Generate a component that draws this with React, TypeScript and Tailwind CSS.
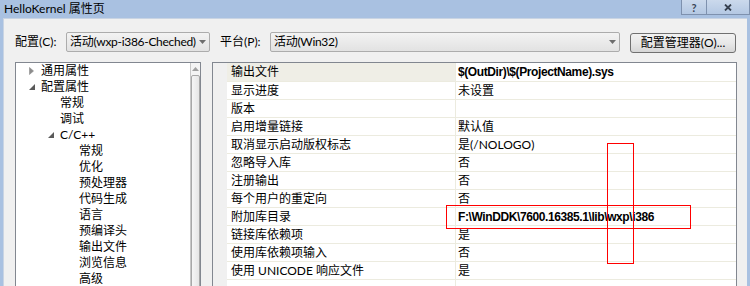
import React from "react";

const FONT = { fontFamily: 'Lato, "Noto Sans CJK SC", sans-serif' };
const BOLD_FONT = { fontFamily: '"Liberation Sans", "Noto Sans CJK SC", sans-serif' };

type TreeItem = { t: string; lvl: 0 | 1 | 2; arrow?: "c" | "e" };

const tree: TreeItem[] = [
  { t: "通用属性", lvl: 0, arrow: "c" },
  { t: "配置属性", lvl: 0, arrow: "e" },
  { t: "常规", lvl: 1 },
  { t: "调试", lvl: 1 },
  { t: "C/C++", lvl: 1, arrow: "e" },
  { t: "常规", lvl: 2 },
  { t: "优化", lvl: 2 },
  { t: "预处理器", lvl: 2 },
  { t: "代码生成", lvl: 2 },
  { t: "语言", lvl: 2 },
  { t: "预编译头", lvl: 2 },
  { t: "输出文件", lvl: 2 },
  { t: "浏览信息", lvl: 2 },
  { t: "高级", lvl: 2 },
];

const lvlPad: Record<number, string> = {
  0: "pl-[13px]",
  1: "pl-[32px]",
  2: "pl-[51px]",
};

type Row = { n: string; v: string; b?: boolean; sel?: boolean };

const rows: Row[] = [
  { n: "输出文件", v: "$(OutDir)\\$(ProjectName).sys", b: true, sel: true },
  { n: "显示进度", v: "未设置" },
  { n: "版本", v: "" },
  { n: "启用增量链接", v: "默认值" },
  { n: "取消显示启动版权标志", v: "是(/NOLOGO)" },
  { n: "忽略导入库", v: "否" },
  { n: "注册输出", v: "否" },
  { n: "每个用户的重定向", v: "否" },
  { n: "附加库目录", v: "F:\\WinDDK\\7600.16385.1\\lib\\wxp\\i386", b: true },
  { n: "链接库依赖项", v: "是" },
  { n: "使用库依赖项输入", v: "否" },
  { n: "使用 UNICODE 响应文件", v: "是" },
];

function DropArrow() {
  return (
    <svg width="7" height="4" viewBox="0 0 7 4" className="shrink-0">
      <path d="M0 0 L7 0 L3.5 4 Z" fill="#6d6d6d" />
    </svg>
  );
}

function Combo({ text, w }: { text: string; w: string }) {
  return (
    <div
      className={`${w} h-[20px] flex items-center justify-between border border-[#acacac] rounded-[2px] bg-gradient-to-b from-[#f3f3f3] to-[#e2e2e2] pl-[3px] pr-[3px] text-[12px] text-black`}
    >
      <span className="leading-none whitespace-nowrap tracking-[-0.3px]">{text}</span>
      <DropArrow />
    </div>
  );
}

function TreeArrow({ kind }: { kind: "c" | "e" }) {
  if (kind === "c") {
    return (
      <svg width="5" height="8" viewBox="0 0 5 8">
        <path d="M0.5 0.5 L4.5 4 L0.5 7.5 Z" fill="#8c8c8c" stroke="#8c8c8c" strokeWidth="0.6" />
      </svg>
    );
  }
  return (
    <svg width="6" height="6" viewBox="0 0 6 6">
      <path d="M6 0 L6 6 L0 6 Z" fill="#5a5a5a" />
    </svg>
  );
}

export default function App() {
  return (
    <div
      className="relative w-[750px] h-[286px] overflow-hidden bg-[#a9c1e1] flex flex-col"
      style={FONT}
    >
      {/* Title bar */}
      <div className="h-[18px] shrink-0 flex items-start justify-between">
        <span className="pl-[4px] pt-[1px] text-[12px] leading-[16px] text-black whitespace-nowrap">
          HelloKernel 属性页
        </span>
        <div className="flex h-[15px]">
          <div className="w-[26px] h-full border border-t-0 border-[#7e91ae] bg-gradient-to-b from-[#cbd9ec] to-[#b4c8e3] flex items-center justify-center text-[11px] font-bold text-[#3a4556] leading-none">
            ?
          </div>
          <div className="w-[43px] h-full border border-t-0 border-l-0 border-[#7e91ae] bg-gradient-to-b from-[#cbd9ec] to-[#b4c8e3] flex items-center justify-center">
            <svg width="8" height="7" viewBox="0 0 8 7">
              <path d="M1 0.5 L7 6.5 M7 0.5 L1 6.5" stroke="#36404f" strokeWidth="1.8" />
            </svg>
          </div>
        </div>
      </div>

      {/* Body */}
      <div className="flex-1 ml-[3px] mr-[3px] bg-[#f0f0f0] border-t border-l border-[#c9d4e3] flex flex-col pl-[11px] pr-[10px] pt-[13px]">
        {/* toolbar */}
        <div className="h-[20px] flex items-center text-[12px] text-black">
          <span className="w-[51px] whitespace-nowrap leading-none">配置(C):</span>
          <Combo text="活动(wxp-i386-Cheched)" w="w-[144px]" />
          <span className="ml-[10px] w-[50px] whitespace-nowrap leading-none">平台(P):</span>
          <Combo text="活动(Win32)" w="w-[350px]" />
          <div className="ml-[10px] w-[106px] h-[20px] mt-[1px] border border-[#707070] rounded-[3px] bg-gradient-to-b from-[#f2f2f2] via-[#e8e8e8] to-[#d6d6d6] flex items-center justify-center whitespace-nowrap leading-none">
            配置管理器(O)...
          </div>
        </div>

        {/* panels */}
        <div className="mt-[10px] flex-1 flex items-stretch">
          {/* tree */}
          <div className="w-[186px] h-[240px] shrink-0 border border-[#828790] bg-white flex">
            <div className="flex-1">
              {tree.map((it, i) => (
                <div
                  key={i}
                  className={`h-[16px] flex items-center ${lvlPad[it.lvl]} text-[12px] text-black`}
                >
                  <span className="w-[12px] flex items-center">
                    {it.arrow ? <TreeArrow kind={it.arrow} /> : null}
                  </span>
                  <span className="leading-none whitespace-nowrap">{it.t}</span>
                </div>
              ))}
            </div>
            <div className="w-[10px] flex flex-col border-l border-[#c8c8c8] bg-[#f4f4f4]">
              <div className="h-[12px] flex items-center justify-center">
                <svg width="7" height="4" viewBox="0 0 7 4">
                  <path d="M0 4 L7 4 L3.5 0 Z" fill="#a0a0a0" />
                </svg>
              </div>
              <div className="flex-1 border border-[#a8a8a8] rounded-[2px] bg-gradient-to-r from-[#f6f6f6] to-[#e6e6e6]" />
            </div>
          </div>

          {/* property grid */}
          <div className="ml-[11px] w-[525px] h-[240px] shrink-0 border border-[#828790] bg-white flex">
            <div className="w-[14px] bg-[#f0f0f0] shrink-0" />
            <div className="flex-1 flex flex-col">
              {rows.map((r, i) => (
                <div
                  key={i}
                  className={`flex text-[12px] text-black border-b border-[#ecebdf] ${i === 0 ? "h-[19px]" : "h-[18px]"}`}
                >
                  <div
                    className={`w-[229px] shrink-0 border-r border-[#ecebdf] pl-[4px] flex items-center ${r.sel ? "bg-[#efeee6]" : ""}`}
                  >
                    <span className="leading-none whitespace-nowrap">{r.n}</span>
                  </div>
                  <div className="flex-1 pl-[2px] flex items-center">
                    {r.b ? (
                      <span
                        className="leading-none whitespace-nowrap font-bold tracking-[-0.4px]"
                        style={BOLD_FONT}
                      >
                        {r.v}
                      </span>
                    ) : (
                      <span className="leading-none whitespace-nowrap">{r.v}</span>
                    )}
                  </div>
                </div>
              ))}
              <div className="flex-1 flex">
                <div className="w-[229px] border-r border-[#ecebdf]" />
              </div>
            </div>
          </div>
        </div>
      </div>

      {/* red annotation boxes */}
      <div className="absolute left-[446px] top-[205px] w-[245px] h-[24px] border border-[#ff0000] pointer-events-none" />
      <div className="absolute left-[607px] top-[143px] w-[27px] h-[121px] border border-[#ff0000] pointer-events-none" />
    </div>
  );
}
